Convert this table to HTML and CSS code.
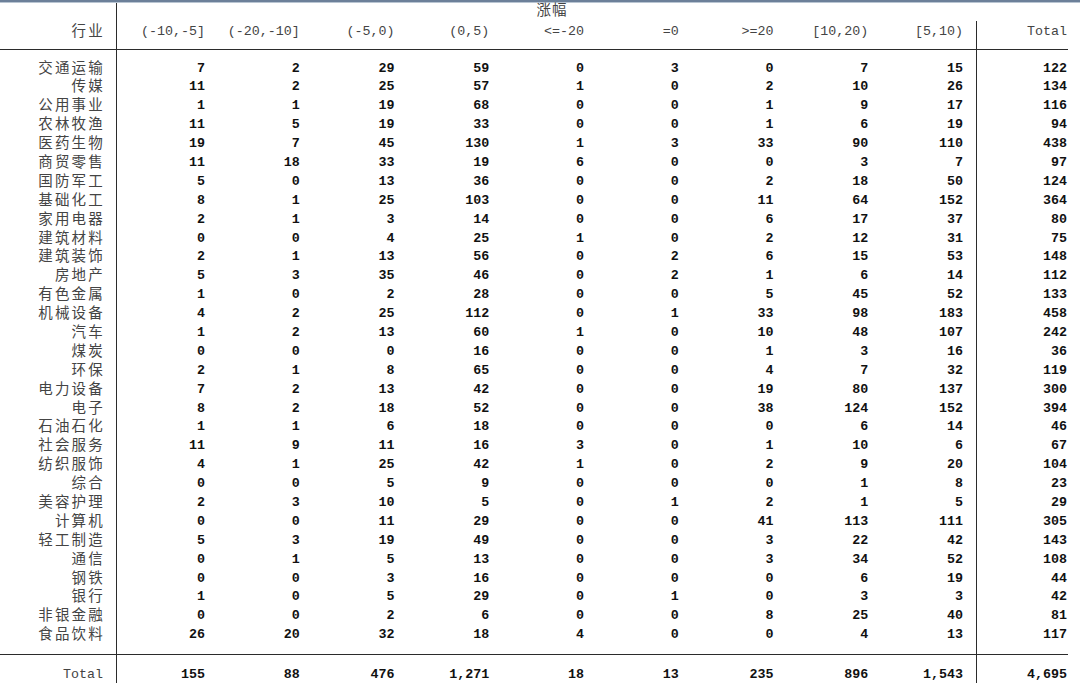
FILE: index.html
```html
<!DOCTYPE html>
<html lang="zh">
<head>
<meta charset="utf-8">
<title>行业 × 涨幅</title>
<link rel="stylesheet" href="styles.css">
</head>
<body>
<div class="topbar"></div>
<div class="tab">
  <div class="row super">
    <div class="lab"></div>
    <div class="span">涨幅</div>
    <div class="tot none"></div>
  </div>
  <div class="row head">
    <div class="lab cjk">行业</div>
    <div class="num">(-10,-5]</div>
    <div class="num">(-20,-10]</div>
    <div class="num">(-5,0)</div>
    <div class="num">(0,5)</div>
    <div class="num">&lt;=-20</div>
    <div class="num">=0</div>
    <div class="num">&gt;=20</div>
    <div class="num">[10,20)</div>
    <div class="num last">[5,10)</div>
    <div class="tot">Total</div>
  </div>
  <div class="row gap top"><div class="lab"></div><div class="fill"></div><div class="tot"></div></div>

  <div class="row"><div class="lab cjk">交通运输</div><div class="num">7</div><div class="num">2</div><div class="num">29</div><div class="num">59</div><div class="num">0</div><div class="num">3</div><div class="num">0</div><div class="num">7</div><div class="num last">15</div><div class="tot">122</div></div>
  <div class="row"><div class="lab cjk">传媒</div><div class="num">11</div><div class="num">2</div><div class="num">25</div><div class="num">57</div><div class="num">1</div><div class="num">0</div><div class="num">2</div><div class="num">10</div><div class="num last">26</div><div class="tot">134</div></div>
  <div class="row"><div class="lab cjk">公用事业</div><div class="num">1</div><div class="num">1</div><div class="num">19</div><div class="num">68</div><div class="num">0</div><div class="num">0</div><div class="num">1</div><div class="num">9</div><div class="num last">17</div><div class="tot">116</div></div>
  <div class="row"><div class="lab cjk">农林牧渔</div><div class="num">11</div><div class="num">5</div><div class="num">19</div><div class="num">33</div><div class="num">0</div><div class="num">0</div><div class="num">1</div><div class="num">6</div><div class="num last">19</div><div class="tot">94</div></div>
  <div class="row"><div class="lab cjk">医药生物</div><div class="num">19</div><div class="num">7</div><div class="num">45</div><div class="num">130</div><div class="num">1</div><div class="num">3</div><div class="num">33</div><div class="num">90</div><div class="num last">110</div><div class="tot">438</div></div>
  <div class="row"><div class="lab cjk">商贸零售</div><div class="num">11</div><div class="num">18</div><div class="num">33</div><div class="num">19</div><div class="num">6</div><div class="num">0</div><div class="num">0</div><div class="num">3</div><div class="num last">7</div><div class="tot">97</div></div>
  <div class="row"><div class="lab cjk">国防军工</div><div class="num">5</div><div class="num">0</div><div class="num">13</div><div class="num">36</div><div class="num">0</div><div class="num">0</div><div class="num">2</div><div class="num">18</div><div class="num last">50</div><div class="tot">124</div></div>
  <div class="row"><div class="lab cjk">基础化工</div><div class="num">8</div><div class="num">1</div><div class="num">25</div><div class="num">103</div><div class="num">0</div><div class="num">0</div><div class="num">11</div><div class="num">64</div><div class="num last">152</div><div class="tot">364</div></div>
  <div class="row"><div class="lab cjk">家用电器</div><div class="num">2</div><div class="num">1</div><div class="num">3</div><div class="num">14</div><div class="num">0</div><div class="num">0</div><div class="num">6</div><div class="num">17</div><div class="num last">37</div><div class="tot">80</div></div>
  <div class="row"><div class="lab cjk">建筑材料</div><div class="num">0</div><div class="num">0</div><div class="num">4</div><div class="num">25</div><div class="num">1</div><div class="num">0</div><div class="num">2</div><div class="num">12</div><div class="num last">31</div><div class="tot">75</div></div>
  <div class="row"><div class="lab cjk">建筑装饰</div><div class="num">2</div><div class="num">1</div><div class="num">13</div><div class="num">56</div><div class="num">0</div><div class="num">2</div><div class="num">6</div><div class="num">15</div><div class="num last">53</div><div class="tot">148</div></div>
  <div class="row"><div class="lab cjk">房地产</div><div class="num">5</div><div class="num">3</div><div class="num">35</div><div class="num">46</div><div class="num">0</div><div class="num">2</div><div class="num">1</div><div class="num">6</div><div class="num last">14</div><div class="tot">112</div></div>
  <div class="row"><div class="lab cjk">有色金属</div><div class="num">1</div><div class="num">0</div><div class="num">2</div><div class="num">28</div><div class="num">0</div><div class="num">0</div><div class="num">5</div><div class="num">45</div><div class="num last">52</div><div class="tot">133</div></div>
  <div class="row"><div class="lab cjk">机械设备</div><div class="num">4</div><div class="num">2</div><div class="num">25</div><div class="num">112</div><div class="num">0</div><div class="num">1</div><div class="num">33</div><div class="num">98</div><div class="num last">183</div><div class="tot">458</div></div>
  <div class="row"><div class="lab cjk">汽车</div><div class="num">1</div><div class="num">2</div><div class="num">13</div><div class="num">60</div><div class="num">1</div><div class="num">0</div><div class="num">10</div><div class="num">48</div><div class="num last">107</div><div class="tot">242</div></div>
  <div class="row"><div class="lab cjk">煤炭</div><div class="num">0</div><div class="num">0</div><div class="num">0</div><div class="num">16</div><div class="num">0</div><div class="num">0</div><div class="num">1</div><div class="num">3</div><div class="num last">16</div><div class="tot">36</div></div>
  <div class="row"><div class="lab cjk">环保</div><div class="num">2</div><div class="num">1</div><div class="num">8</div><div class="num">65</div><div class="num">0</div><div class="num">0</div><div class="num">4</div><div class="num">7</div><div class="num last">32</div><div class="tot">119</div></div>
  <div class="row"><div class="lab cjk">电力设备</div><div class="num">7</div><div class="num">2</div><div class="num">13</div><div class="num">42</div><div class="num">0</div><div class="num">0</div><div class="num">19</div><div class="num">80</div><div class="num last">137</div><div class="tot">300</div></div>
  <div class="row"><div class="lab cjk">电子</div><div class="num">8</div><div class="num">2</div><div class="num">18</div><div class="num">52</div><div class="num">0</div><div class="num">0</div><div class="num">38</div><div class="num">124</div><div class="num last">152</div><div class="tot">394</div></div>
  <div class="row"><div class="lab cjk">石油石化</div><div class="num">1</div><div class="num">1</div><div class="num">6</div><div class="num">18</div><div class="num">0</div><div class="num">0</div><div class="num">0</div><div class="num">6</div><div class="num last">14</div><div class="tot">46</div></div>
  <div class="row"><div class="lab cjk">社会服务</div><div class="num">11</div><div class="num">9</div><div class="num">11</div><div class="num">16</div><div class="num">3</div><div class="num">0</div><div class="num">1</div><div class="num">10</div><div class="num last">6</div><div class="tot">67</div></div>
  <div class="row"><div class="lab cjk">纺织服饰</div><div class="num">4</div><div class="num">1</div><div class="num">25</div><div class="num">42</div><div class="num">1</div><div class="num">0</div><div class="num">2</div><div class="num">9</div><div class="num last">20</div><div class="tot">104</div></div>
  <div class="row"><div class="lab cjk">综合</div><div class="num">0</div><div class="num">0</div><div class="num">5</div><div class="num">9</div><div class="num">0</div><div class="num">0</div><div class="num">0</div><div class="num">1</div><div class="num last">8</div><div class="tot">23</div></div>
  <div class="row"><div class="lab cjk">美容护理</div><div class="num">2</div><div class="num">3</div><div class="num">10</div><div class="num">5</div><div class="num">0</div><div class="num">1</div><div class="num">2</div><div class="num">1</div><div class="num last">5</div><div class="tot">29</div></div>
  <div class="row"><div class="lab cjk">计算机</div><div class="num">0</div><div class="num">0</div><div class="num">11</div><div class="num">29</div><div class="num">0</div><div class="num">0</div><div class="num">41</div><div class="num">113</div><div class="num last">111</div><div class="tot">305</div></div>
  <div class="row"><div class="lab cjk">轻工制造</div><div class="num">5</div><div class="num">3</div><div class="num">19</div><div class="num">49</div><div class="num">0</div><div class="num">0</div><div class="num">3</div><div class="num">22</div><div class="num last">42</div><div class="tot">143</div></div>
  <div class="row"><div class="lab cjk">通信</div><div class="num">0</div><div class="num">1</div><div class="num">5</div><div class="num">13</div><div class="num">0</div><div class="num">0</div><div class="num">3</div><div class="num">34</div><div class="num last">52</div><div class="tot">108</div></div>
  <div class="row"><div class="lab cjk">钢铁</div><div class="num">0</div><div class="num">0</div><div class="num">3</div><div class="num">16</div><div class="num">0</div><div class="num">0</div><div class="num">0</div><div class="num">6</div><div class="num last">19</div><div class="tot">44</div></div>
  <div class="row"><div class="lab cjk">银行</div><div class="num">1</div><div class="num">0</div><div class="num">5</div><div class="num">29</div><div class="num">0</div><div class="num">1</div><div class="num">0</div><div class="num">3</div><div class="num last">3</div><div class="tot">42</div></div>
  <div class="row"><div class="lab cjk">非银金融</div><div class="num">0</div><div class="num">0</div><div class="num">2</div><div class="num">6</div><div class="num">0</div><div class="num">0</div><div class="num">8</div><div class="num">25</div><div class="num last">40</div><div class="tot">81</div></div>
  <div class="row"><div class="lab cjk">食品饮料</div><div class="num">26</div><div class="num">20</div><div class="num">32</div><div class="num">18</div><div class="num">4</div><div class="num">0</div><div class="num">0</div><div class="num">4</div><div class="num last">13</div><div class="tot">117</div></div>

  <div class="row gap bottom"><div class="lab"></div><div class="fill"></div><div class="tot"></div></div>
  <div class="row total"><div class="lab">Total</div><div class="num">155</div><div class="num">88</div><div class="num">476</div><div class="num">1,271</div><div class="num">18</div><div class="num">13</div><div class="num">235</div><div class="num">896</div><div class="num last">1,543</div><div class="tot">4,695</div></div>
</div>
</body>
</html>
```

FILE: styles.css
```css
* {
  box-sizing: border-box;
}

html, body {
  margin: 0;
  padding: 0;
  background: #ffffff;
}

body {
  font-family: "Liberation Mono", "Noto Sans CJK SC", monospace;
  font-size: 13.33px;
  color: #111;
}

.topbar {
  height: 3px;
  background: #6c8099;
  border-bottom: 1px solid #b9c5d2;
}

.tab {
  width: 1068px;
}

.row {
  display: grid;
  grid-template-columns: 117px 88px repeat(7, 94.75px) 107.75px 92px;
  height: 18.9px;
  line-height: 18.9px;
}

.lab {
  border-right: 1px solid #2b2b2b;
  text-align: right;
  padding-right: 13px;
  color: #444;
  white-space: nowrap;
}

.lab.cjk {
  font-size: 14.5px;
  letter-spacing: 2.2px;
  padding-right: 11px;
  color: #444;
}

.num {
  text-align: right;
  font-weight: bold;
  white-space: nowrap;
}

.num.last {
  padding-right: 13px;
}

.tot {
  border-left: 1px solid #2b2b2b;
  text-align: right;
  padding-right: 1px;
  font-weight: bold;
  white-space: nowrap;
}

.tot.none {
  border-left: none;
}

/* super header row (涨幅) */
.super {
  height: 18px;
  line-height: 17px;
}

.super .span {
  grid-column: 2 / 11;
  text-align: center;
  font-size: 14.5px;
  letter-spacing: 1px;
  color: #444;
  padding-left: 11px;
}

/* column header row */
.head {
  height: 28.5px;
  line-height: 18px;
  border-bottom: 1px solid #2b2b2b;
}

.head .lab,
.head .num,
.head .tot {
  padding-top: 2px;
  font-weight: normal;
  color: #444;
}

.fill {
  grid-column: 2 / 10;
}

.gap.top {
  height: 10px;
}

.gap.bottom {
  height: 10px;
  border-bottom: 1px solid #2b2b2b;
}

.gap .fill + .tot {
  grid-column: 11;
}

.total {
  height: 28px;
  line-height: 18px;
}

.total .lab,
.total .num,
.total .tot {
  padding-top: 11px;
}

.total .lab {
  font-weight: normal;
  color: #444;
}
```
